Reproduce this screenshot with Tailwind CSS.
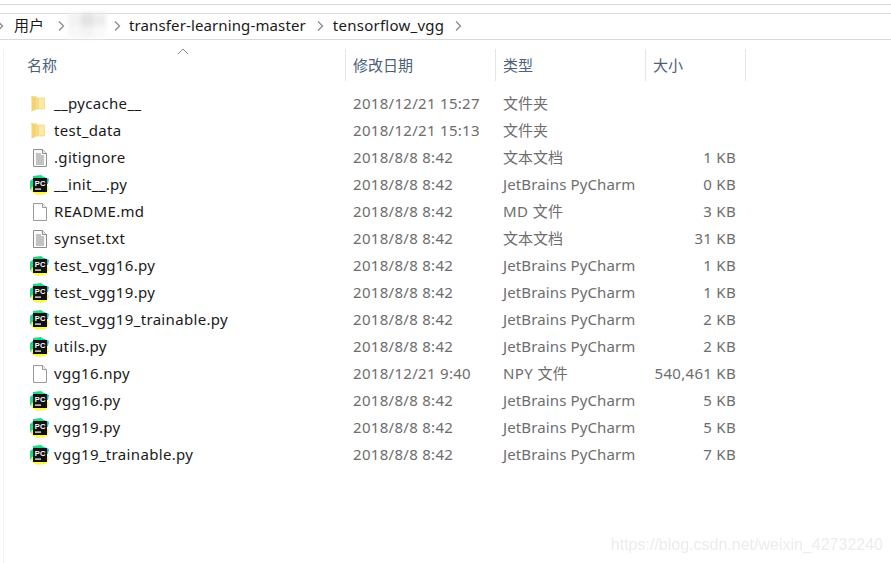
<!DOCTYPE html>
<html lang="zh-CN">

<head>
  <meta charset="UTF-8">
  <meta name="viewport" content="width=device-width, initial-scale=1.0">
  <title>tensorflow_vgg</title>
  <script src="https://cdn.jsdelivr.net/npm/@tailwindcss/browser@4"></script>
</head>

<body class="bg-white">
  <svg class="absolute w-0 h-0">
    <defs>
      <symbol id="folder" viewBox="0 0 14 16">
        <path d="M.5.5h5v1.500h8v11h-8z" fill="#fce9a8" stroke="#ecd588" stroke-width="0.700" />
        <path d="M.5.5l5 1.500v11.500l-5 2z" fill="#f5d36e" />
        <path d="M7 2v11" stroke="#f3d98a" stroke-width="2" />
      </symbol>
      <symbol id="textfile" viewBox="0 0 16 18">
        <path d="M1.500.5h9l4 4v13h-13z" fill="#fafafa" stroke="#8f8f8f" />
        <path d="M10.500.5v4h4" fill="#e8e8e8" stroke="#8f8f8f" />
        <path d="M4 5h5M4 7h8M4 9h8M4 11h8M4 13h8M4 15h8" stroke="#8c8c8c" />
      </symbol>
      <symbol id="blankfile" viewBox="0 0 16 18">
        <path d="M1.500.5h9l4 4v13h-13z" fill="#fff" stroke="#9a9a9a" />
        <path d="M10.500.5v4h4" fill="#f0f0f0" stroke="#9a9a9a" />
      </symbol>
      <symbol id="pycharm" viewBox="0 0 20 20">
        <path d="M3 1l8-1 4 3-1 3H3z" fill="#21d789" />
        <path d="M14 2l5 2-1 5-4 0z" fill="#07c3f2" />
        <path d="M0 6l4-3v14l-4-3z" fill="#21d789" />
        <path d="M1 13l3-2h14l1 3-3 5-9 1-5-3z" fill="#fcf84a" />
        <rect x="3" y="3" width="14" height="14" fill="#111" />
        <rect x="5" y="13.500" width="6" height="1.200" fill="#fff" />
        <text x="4.700" y="11" font-size="7.500" font-weight="700" fill="#fff" font-family="Liberation Sans, sans-serif">PC</text>
      </symbol>
      <symbol id="crumb" viewBox="0 0 8 12">
        <path d="M2 1.500L6.500 6 2 10.500" fill="none" stroke="#8a8a8a" stroke-width="1.300" />
      </symbol>
    </defs>
  </svg>

  <div class="relative w-[891px] h-[563px] overflow-hidden font-['Noto_Sans','Noto_Sans_CJK_SC',sans-serif] text-[15px]">
    <div class="h-[13px] pt-1">
      <div class="h-px bg-[#d9d9d9]"></div>
    </div>

    <!-- address bar -->
    <div class="h-[27px] flex items-center pb-[2px] border-t border-b border-[#d9d9d9] text-[#1a1a1a]">
      <svg class="w-2 h-3 ml-[-4px]"><use href="#crumb" /></svg>
      <span class="ml-[10px]">用户</span>
      <svg class="w-2 h-3 ml-[13px]"><use href="#crumb" /></svg>
      <div class="flex flex-wrap w-[38px] h-[25px] ml-[3px] blur-[2px]">
        <div class="w-[13px] h-[13px] bg-[#f2f2f2]"></div>
        <div class="w-[12px] h-[13px] bg-[#e3e3e3]"></div>
        <div class="w-[13px] h-[13px] bg-[#ededed]"></div>
        <div class="w-[13px] h-[12px] bg-[#f7f7f7]"></div>
        <div class="w-[12px] h-[12px] bg-[#f3f3f3]"></div>
        <div class="w-[13px] h-[12px] bg-[#f9f9f9]"></div>
      </div>
      <svg class="w-2 h-3 ml-[7px]"><use href="#crumb" /></svg>
      <span class="ml-[8px] tracking-[0.12px]">transfer-learning-master</span>
      <svg class="w-2 h-3 ml-[10px]"><use href="#crumb" /></svg>
      <span class="ml-[9px] tracking-[0.25px]">tensorflow_vgg</span>
      <svg class="w-2 h-3 ml-[10px]"><use href="#crumb" /></svg>
    </div>

    <!-- file list -->
    <div class="ml-[3px] mt-[9px] h-[514px] border-l border-[#f2f2f2]">
      <div class="relative h-[32px] flex text-[#4c607a] leading-[33px]">
        <svg class="absolute left-[173px] top-[-1px] w-[12px] h-[7px]" viewBox="0 0 12 7"><path d="M1 6l5-5 5 5" fill="none" stroke="#8a8a8a" /></svg>
        <div class="w-[342px] pl-[23px] border-r border-[#e5e5e5]">名称</div>
        <div class="w-[150px] pl-[7px] border-r border-[#e5e5e5]">修改日期</div>
        <div class="w-[150px] pl-[7px] border-r border-[#e5e5e5]">类型</div>
        <div class="w-[100px] pl-[7px] border-r border-[#e5e5e5]">大小</div>
      </div>

      <div class="mt-[9px] text-[#6d6d6d] leading-[27px]">
        <div class="flex h-[27px]">
          <div class="w-[342px] flex items-center text-[#1a1a1a] tracking-[0.33px]"><svg class="w-[14px] h-4 ml-[27px] mr-[9px]"><use href="#folder" /></svg>__pycache__</div>
          <div class="w-[150px] pl-[7px] tracking-[0.3px]">2018/12/21 15:27</div>
          <div class="w-[150px] pl-[7px]">文件夹</div>
        </div>
        <div class="flex h-[27px]">
          <div class="w-[342px] flex items-center text-[#1a1a1a] tracking-[0.33px]"><svg class="w-[14px] h-4 ml-[27px] mr-[9px]"><use href="#folder" /></svg>test_data</div>
          <div class="w-[150px] pl-[7px] tracking-[0.3px]">2018/12/21 15:13</div>
          <div class="w-[150px] pl-[7px]">文件夹</div>
        </div>
        <div class="flex h-[27px]">
          <div class="w-[342px] flex items-center text-[#1a1a1a] tracking-[0.33px]"><svg class="w-4 h-[18px] ml-[28px] mr-[6px]"><use href="#textfile" /></svg>.gitignore</div>
          <div class="w-[150px] pl-[7px] tracking-[0.3px]">2018/8/8 8:42</div>
          <div class="w-[150px] pl-[7px]">文本文档</div>
          <div class="w-[90px] text-right tracking-[0.3px]">1 KB</div>
        </div>
        <div class="flex h-[27px]">
          <div class="w-[342px] flex items-center text-[#1a1a1a] tracking-[0.33px]"><svg class="w-5 h-5 ml-[26px] mr-[4px]"><use href="#pycharm" /></svg>__init__.py</div>
          <div class="w-[150px] pl-[7px] tracking-[0.3px]">2018/8/8 8:42</div>
          <div class="w-[150px] pl-[7px] tracking-[0.12px]">JetBrains PyCharm</div>
          <div class="w-[90px] text-right tracking-[0.3px]">0 KB</div>
        </div>
        <div class="flex h-[27px]">
          <div class="w-[342px] flex items-center text-[#1a1a1a] tracking-[0.33px]"><svg class="w-4 h-[18px] ml-[28px] mr-[6px]"><use href="#blankfile" /></svg>README.md</div>
          <div class="w-[150px] pl-[7px] tracking-[0.3px]">2018/8/8 8:42</div>
          <div class="w-[150px] pl-[7px] tracking-[0.4px]">MD 文件</div>
          <div class="w-[90px] text-right tracking-[0.3px]">3 KB</div>
        </div>
        <div class="flex h-[27px]">
          <div class="w-[342px] flex items-center text-[#1a1a1a] tracking-[0.33px]"><svg class="w-4 h-[18px] ml-[28px] mr-[6px]"><use href="#textfile" /></svg>synset.txt</div>
          <div class="w-[150px] pl-[7px] tracking-[0.3px]">2018/8/8 8:42</div>
          <div class="w-[150px] pl-[7px]">文本文档</div>
          <div class="w-[90px] text-right tracking-[0.3px]">31 KB</div>
        </div>
        <div class="flex h-[27px]">
          <div class="w-[342px] flex items-center text-[#1a1a1a] tracking-[0.33px]"><svg class="w-5 h-5 ml-[26px] mr-[4px]"><use href="#pycharm" /></svg>test_vgg16.py</div>
          <div class="w-[150px] pl-[7px] tracking-[0.3px]">2018/8/8 8:42</div>
          <div class="w-[150px] pl-[7px] tracking-[0.12px]">JetBrains PyCharm</div>
          <div class="w-[90px] text-right tracking-[0.3px]">1 KB</div>
        </div>
        <div class="flex h-[27px]">
          <div class="w-[342px] flex items-center text-[#1a1a1a] tracking-[0.33px]"><svg class="w-5 h-5 ml-[26px] mr-[4px]"><use href="#pycharm" /></svg>test_vgg19.py</div>
          <div class="w-[150px] pl-[7px] tracking-[0.3px]">2018/8/8 8:42</div>
          <div class="w-[150px] pl-[7px] tracking-[0.12px]">JetBrains PyCharm</div>
          <div class="w-[90px] text-right tracking-[0.3px]">1 KB</div>
        </div>
        <div class="flex h-[27px]">
          <div class="w-[342px] flex items-center text-[#1a1a1a] tracking-[0.33px]"><svg class="w-5 h-5 ml-[26px] mr-[4px]"><use href="#pycharm" /></svg>test_vgg19_trainable.py</div>
          <div class="w-[150px] pl-[7px] tracking-[0.3px]">2018/8/8 8:42</div>
          <div class="w-[150px] pl-[7px] tracking-[0.12px]">JetBrains PyCharm</div>
          <div class="w-[90px] text-right tracking-[0.3px]">2 KB</div>
        </div>
        <div class="flex h-[27px]">
          <div class="w-[342px] flex items-center text-[#1a1a1a] tracking-[0.33px]"><svg class="w-5 h-5 ml-[26px] mr-[4px]"><use href="#pycharm" /></svg>utils.py</div>
          <div class="w-[150px] pl-[7px] tracking-[0.3px]">2018/8/8 8:42</div>
          <div class="w-[150px] pl-[7px] tracking-[0.12px]">JetBrains PyCharm</div>
          <div class="w-[90px] text-right tracking-[0.3px]">2 KB</div>
        </div>
        <div class="flex h-[27px]">
          <div class="w-[342px] flex items-center text-[#1a1a1a] tracking-[0.33px]"><svg class="w-4 h-[18px] ml-[28px] mr-[6px]"><use href="#blankfile" /></svg>vgg16.npy</div>
          <div class="w-[150px] pl-[7px] tracking-[0.3px]">2018/12/21 9:40</div>
          <div class="w-[150px] pl-[7px] tracking-[0.4px]">NPY 文件</div>
          <div class="w-[90px] text-right tracking-[0.3px]">540,461 KB</div>
        </div>
        <div class="flex h-[27px]">
          <div class="w-[342px] flex items-center text-[#1a1a1a] tracking-[0.33px]"><svg class="w-5 h-5 ml-[26px] mr-[4px]"><use href="#pycharm" /></svg>vgg16.py</div>
          <div class="w-[150px] pl-[7px] tracking-[0.3px]">2018/8/8 8:42</div>
          <div class="w-[150px] pl-[7px] tracking-[0.12px]">JetBrains PyCharm</div>
          <div class="w-[90px] text-right tracking-[0.3px]">5 KB</div>
        </div>
        <div class="flex h-[27px]">
          <div class="w-[342px] flex items-center text-[#1a1a1a] tracking-[0.33px]"><svg class="w-5 h-5 ml-[26px] mr-[4px]"><use href="#pycharm" /></svg>vgg19.py</div>
          <div class="w-[150px] pl-[7px] tracking-[0.3px]">2018/8/8 8:42</div>
          <div class="w-[150px] pl-[7px] tracking-[0.12px]">JetBrains PyCharm</div>
          <div class="w-[90px] text-right tracking-[0.3px]">5 KB</div>
        </div>
        <div class="flex h-[27px]">
          <div class="w-[342px] flex items-center text-[#1a1a1a] tracking-[0.33px]"><svg class="w-5 h-5 ml-[26px] mr-[4px]"><use href="#pycharm" /></svg>vgg19_trainable.py</div>
          <div class="w-[150px] pl-[7px] tracking-[0.3px]">2018/8/8 8:42</div>
          <div class="w-[150px] pl-[7px] tracking-[0.12px]">JetBrains PyCharm</div>
          <div class="w-[90px] text-right tracking-[0.3px]">7 KB</div>
        </div>
      </div>
    </div>

    <!-- watermark -->
    <div class="absolute right-[8px] bottom-[9px] text-[16px] leading-[18px] text-[#ececec] blur-[0.4px] font-['Liberation_Sans',sans-serif]">https://blog.csdn.net/weixin_42732240</div>
  </div>
</body>
</html>
